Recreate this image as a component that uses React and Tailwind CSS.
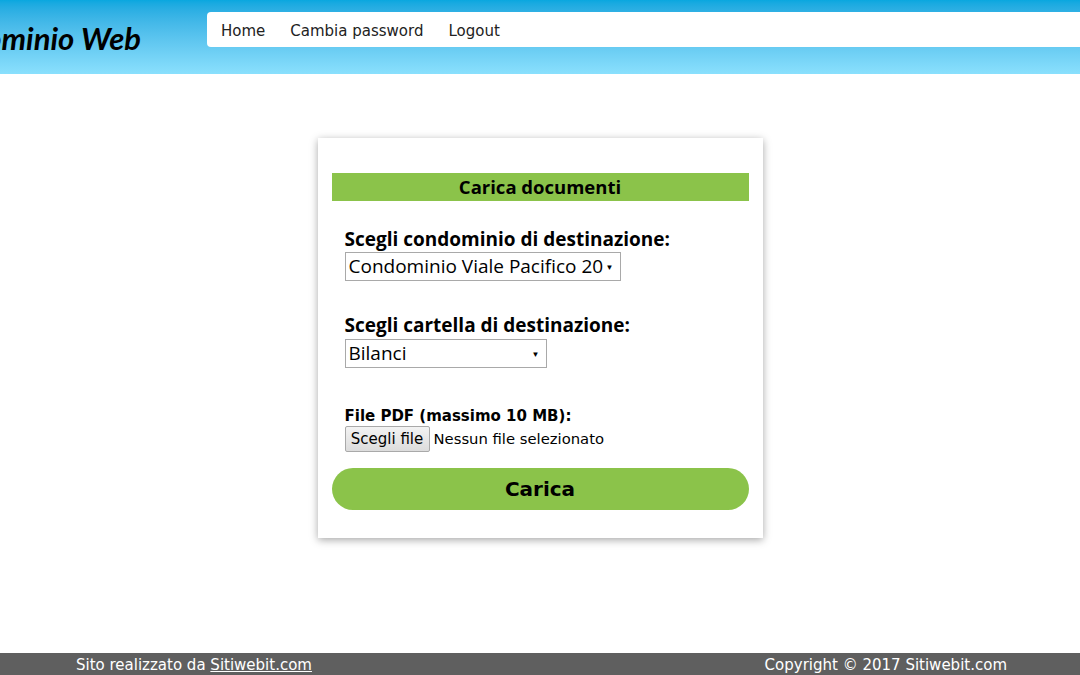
import React from 'react';

const SEGOE = { fontFamily: '"Open Sans", "Noto Sans", sans-serif' };

function FakeSelect({ value, width }) {
  return (
    <div
      className={`${width} h-[29px] border border-[#a9a9a9] bg-white flex items-center justify-between pl-[3px] pr-[6px] text-[19px] text-black leading-none`}
      style={SEGOE}
    >
      <span>{value}</span>
      <span className="text-[8px] text-black">▼</span>
    </div>
  );
}

export default function App() {
  return (
    <div className="min-h-[675px] flex flex-col bg-white" style={{ fontFamily: '"DejaVu Sans", Verdana, sans-serif' }}>
      {/* Header */}
      <header className="h-[74px] bg-linear-to-b from-[#08a7df] to-[#8ae0fd] flex items-start pt-[12px]">
        <div className="w-[207px] overflow-hidden flex justify-end pr-[66px] pt-[8px]">
          <span
            className="whitespace-nowrap text-[31px] font-bold italic text-black leading-[36px]"
            style={{ fontFamily: 'Lato, "Open Sans", sans-serif' }}
          >
            Condominio Web
          </span>
        </div>
        <nav className="flex-1 h-[35px] bg-white rounded-l-[4px] flex items-center pl-[14px] pt-[3px] gap-[25px] text-[15px] text-[#222]">
          <a>Home</a>
          <a>Cambia password</a>
          <a>Logout</a>
        </nav>
      </header>

      {/* Main */}
      <main className="flex-1 flex justify-center pt-[64px]">
        <div className="w-[445px] h-[400px] bg-white shadow-[0_2px_8px_rgba(0,0,0,0.35)] px-[14px] pt-[35px]">
          <div className="h-[28px] bg-[#8bc34a] flex items-center justify-center text-[18.5px] font-bold text-black" style={SEGOE}>
            Carica documenti
          </div>

          <div className="pl-[13px]">
            <div className="mt-[26px] text-[19px] font-bold text-black leading-[25px]" style={SEGOE}>
              Scegli condominio di destinazione:
            </div>
            <FakeSelect value="Condominio Viale Pacifico 20" width="w-[276px]" />

            <div className="mt-[32px] text-[19px] font-bold text-black leading-[25px]" style={SEGOE}>
              Scegli cartella di destinazione:
            </div>
            <div className="mt-[1px]">
              <FakeSelect value="Bilanci" width="w-[202px]" />
            </div>

            <div className="mt-[38px] text-[15px] font-bold text-black leading-[20px]">
              File PDF (massimo 10 MB):
            </div>
            <div className="flex items-center gap-[4px] text-[15px] text-black">
              <div className="h-[26px] w-[85px] border border-[#a9a9a9] rounded-[2px] bg-linear-to-b from-[#f3f3f3] to-[#dcdcdc] flex items-center justify-center">
                Scegli file
              </div>
              <span className="text-[14.8px]">Nessun file selezionato</span>
            </div>
          </div>

          <div className="mt-[16px] h-[42px] rounded-full bg-[#8bc34a] flex items-center justify-center text-[20px] font-bold text-black">
            Carica
          </div>
        </div>
      </main>

      {/* Footer */}
      <footer className="h-[22px] bg-[#5f5f5f] flex items-center justify-between pl-[76px] pr-[73px] pt-[2px] text-[15px] text-white">
        <span>
          Sito realizzato da <a className="underline">Sitiwebit.com</a>
        </span>
        <span>Copyright © 2017 Sitiwebit.com</span>
      </footer>
    </div>
  );
}
